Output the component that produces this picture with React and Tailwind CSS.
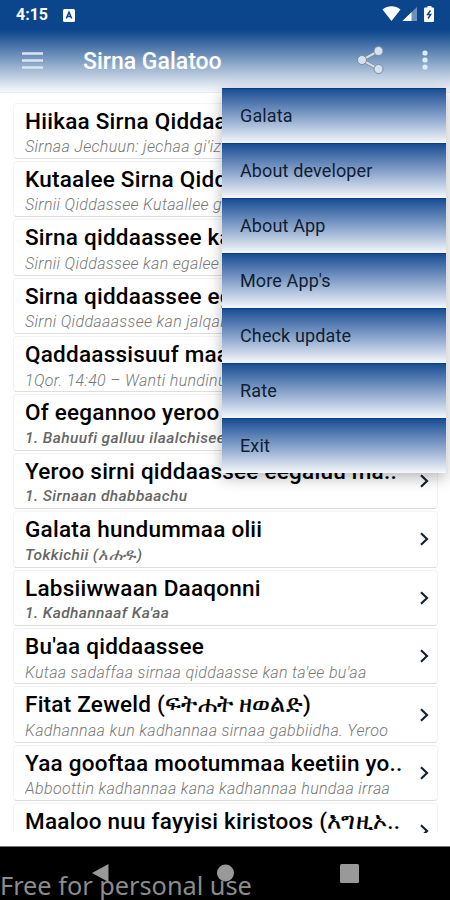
import React from 'react';

const ROWS = [
  { title: 'Hiikaa Sirna Qiddaassee', sub: "Sirnaa Jechuun: jechaa gi'iz" },
  { title: 'Kutaalee Sirna Qiddaassee', sub: 'Sirnii Qiddassee Kutaallee gurguddaa' },
  { title: 'Sirna qiddaassee kan', sub: 'Sirnii Qiddassee kan egalee' },
  { title: 'Sirna qiddaassee egaluu', sub: 'Sirni Qiddaaassee kan jalqabu' },
  { title: 'Qaddaassisuuf maal', sub: '1Qor. 14:40 – Wanti hundinuu' },
  { title: 'Of eegannoo yeroo', sub: '1. Bahuufi galluu ilaalchisee', strong: true },
  { title: 'Yeroo sirni qiddaassee eegaluu ma..', sub: '1. Sirnaan dhabbaachu', strong: true },
  { title: 'Galata hundummaa olii', sub: 'Tokkichii (አሐዱ)', strong: true },
  { title: 'Labsiiwwaan Daaqonni', sub: "1. Kadhannaaf Ka'aa", strong: true },
  { title: "Bu'aa qiddaassee", sub: "Kutaa sadaffaa sirnaa qiddaasse kan ta'ee bu'aa" },
  { title: 'Fitat Zeweld (ፍትሐት ዘወልድ)', sub: 'Kadhannaa kun kadhannaa sirnaa gabbiidha. Yeroo' },
  { title: 'Yaa gooftaa mootummaa keetiin yo..', sub: 'Abboottin kadhannaa kana kadhannaa hundaa irraa' },
  { title: 'Maaloo nuu fayyisi kiristoos (እግዚኦ..', sub: '' },
];

const MENU = ['Galata', 'About developer', 'About App', "More App's", 'Check update', 'Rate', 'Exit'];

// Ge'ez letters are drawn a bit larger and heavier than the Latin ones around them
const MixedText = ({ text }) =>
  text.split(/([\u1200-\u137f]+)/).map((part, i) =>
    i % 2 ? (
      <span key={i} className="text-[1.07em] leading-none font-normal [-webkit-text-stroke:0.01em_currentColor]">
        {part}
      </span>
    ) : (
      part
    )
  );

const StatusBar = () => (
  <div className="flex h-[30px] items-center pl-4 text-white">
    <span className="w-[47px] text-[16px] leading-none font-bold">4:15</span>
    <svg width="12" height="13" viewBox="0 0 12 13">
      <rect width="12" height="13" rx="1.5" fill="#fff" />
      <path d="M3.3 9.5 6 3.2l2.7 6.3M4.3 7.6h3.4" fill="none" stroke="#0b458b" strokeWidth="1.5" />
    </svg>
    <svg className="mr-[14px] mb-[2px] ml-auto" width="54" height="18" viewBox="0 0 54 18">
      <path d="M0.5 4.5C6 0.2 13 0.2 18.5 4.5L9.5 16Z" fill="#fff" />
      <path d="M35 2v14H20.5Z" fill="#6e8fbb" />
      <path d="M29.5 7.3V16H20.5Z" fill="#fff" />
      <path d="M45.5 1h4v1.5h1.5a1 1 0 0 1 1 1V16a1 1 0 0 1-1 1h-8a1 1 0 0 1-1-1V3.500a1 1 0 0 1 1-1h2.500Z" fill="#fff" />
      <path d="M48.5 5.5 45.5 9.500h3.200L46 13.500" fill="none" stroke="#0b458b" strokeWidth="1.4" />
    </svg>
  </div>
);

const AppBar = () => (
  <div className="flex h-[62px] items-center pl-[22px]">
    <svg className="mb-[2px]" width="21" height="17" viewBox="0 0 21 17" stroke="#dae5f2" strokeWidth="2.3">
      <path d="M0 1.5h21M0 8.5h21M0 15.5h21" />
    </svg>
    <h1 className="ml-10 text-[23px] leading-none font-medium text-white">Sirna Galatoo</h1>
    <svg className="mb-[2px] ml-auto" width="28" height="30" viewBox="0 0 28 30">
      <path d="M21.5 6 5 15l16.500 9" fill="none" stroke="#7b8593" strokeWidth="3.4" />
      <path d="M21.5 6 5 15l16.500 9" fill="none" stroke="#d5dde8" strokeWidth="2" />
      <g fill="#d5e2f1" stroke="#7b8593" strokeWidth="0.9">
        <circle cx="21.5" cy="6" r="4.5" />
        <circle cx="5" cy="15" r="4.5" />
        <circle cx="21.5" cy="24" r="4.5" />
      </g>
    </svg>
    <svg className="mr-[21px] mb-[2px] ml-[36px]" width="8" height="20" viewBox="0 0 8 20" fill="#d9edff">
      <circle cx="4" cy="3" r="2.6" />
      <circle cx="4" cy="10" r="2.6" />
      <circle cx="4" cy="17" r="2.6" />
    </svg>
  </div>
);

const Row = ({ title, sub, strong }) => (
  <li className="flex h-[58.4px] shrink-0 pb-[2px]">
    <div className="flex min-w-0 flex-1 items-center rounded-[4px] border border-[#f3f3f3] border-b-[#dedede] bg-white pr-[7px] pl-[11px]">
      <div className="min-w-0 flex-1 self-start overflow-hidden whitespace-nowrap">
        <div className="mt-[3px] h-[28.5px] text-[22.5px] leading-[28px] font-medium tracking-[0.24px] text-black">
          <MixedText text={title} />
        </div>
        <div
          className={
            strong
              ? 'h-[23px] text-[15.5px] leading-[23px] font-medium italic tracking-[0.4px] text-[#666]'
              : 'h-[23px] text-[16px] leading-[23px] font-light italic tracking-[0.33px] text-[#777]'
          }
        >
          <MixedText text={sub} />
        </div>
      </div>
      <svg className="shrink-0" width="12" height="16" viewBox="0 0 12 16">
        <path d="M3 2.3 9 8l-6 5.7" fill="none" stroke="#142230" strokeWidth="2.2" />
      </svg>
    </div>
  </li>
);

const OverflowMenu = () => (
  <div className="absolute top-[88px] left-[222px] w-[223.5px] bg-white shadow-[0_5px_14px_rgba(0,0,0,0.28)]">
    {MENU.map((item) => (
      <div
        key={item}
        className="flex h-[55px] items-center border-t border-[#0b3c86] bg-linear-to-b from-[#174d93] to-[#f6f8fb] pb-[2px] pl-[18px] text-[18px] tracking-[0.13px] text-[#101d33]"
      >
        {item}
      </div>
    ))}
  </div>
);

const NavBar = () => (
  <div className="relative h-[54px] overflow-hidden border-t border-[#777] bg-black">
    <svg className="block" width="450" height="53" viewBox="0 0 450 53" fill="#999">
      <path d="M92 26 108.5 17v18Z" />
      <circle cx="225.5" cy="26" r="8.5" />
      <rect x="340" y="17" width="19" height="19" rx="1.5" />
    </svg>
    <div className="absolute top-[23px] left-0 font-['Noto_Sans',sans-serif] text-[25.3px] leading-[31px] whitespace-nowrap text-[#8c8c8c]">
      Free for personal use
    </div>
  </div>
);

export default function App() {
  return (
    <div className="relative flex h-[900px] w-[450px] flex-col overflow-hidden bg-white font-['Roboto',sans-serif]">
      <header className="h-[92px] shrink-0 bg-[linear-gradient(#0b458b_0px,#0b458b_30px,#e9eff5_88px,#f4f7fa_92px)]">
        <StatusBar />
        <AppBar />
      </header>
      <main className="h-[754px] shrink-0 border-t border-[#ececec] pb-[13px]">
        <ul className="flex h-full flex-col overflow-hidden pt-[9.5px] pr-[12px] pl-[13px]">
          {ROWS.map((row) => (
            <Row key={row.title} {...row} />
          ))}
        </ul>
      </main>
      <NavBar />
      <OverflowMenu />
    </div>
  );
}
